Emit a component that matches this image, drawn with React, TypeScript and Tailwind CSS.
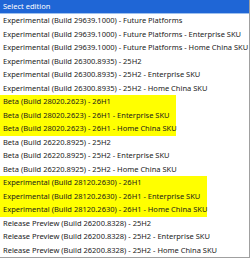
import React from "react";

type Row = { t: string; hl?: number };

const rows: Row[] = [
  { t: "Experimental (Build 29639.1000) - Future Platforms" },
  { t: "Experimental (Build 29639.1000) - Future Platforms - Enterprise SKU" },
  { t: "Experimental (Build 29639.1000) - Future Platforms - Home China SKU" },
  { t: "Experimental (Build 26300.8935) - 25H2" },
  { t: "Experimental (Build 26300.8935) - 25H2 - Enterprise SKU" },
  { t: "Experimental (Build 26300.8935) - 25H2 - Home China SKU" },
  { t: "Beta (Build 28020.2623) - 26H1", hl: 176 },
  { t: "Beta (Build 28020.2623) - 26H1 - Enterprise SKU", hl: 176 },
  { t: "Beta (Build 28020.2623) - 26H1 - Home China SKU", hl: 176 },
  { t: "Beta (Build 26220.8925) - 25H2" },
  { t: "Beta (Build 26220.8925) - 25H2 - Enterprise SKU" },
  { t: "Beta (Build 26220.8925) - 25H2 - Home China SKU" },
  { t: "Experimental (Build 28120.2630) - 26H1", hl: 207 },
  { t: "Experimental (Build 28120.2630) - 26H1 - Enterprise SKU", hl: 207 },
  { t: "Experimental (Build 28120.2630) - 26H1 - Home China SKU", hl: 207 },
  { t: "Release Preview (Build 26200.8328) - 25H2" },
  { t: "Release Preview (Build 26200.8328) - 25H2 - Enterprise SKU" },
  { t: "Release Preview (Build 26200.8328) - 25H2 - Home China SKU" },
];

export default function App() {
  return (
    <div
      className="w-[250px] h-[261px] bg-white overflow-hidden text-[7.5px] leading-none text-[#1a1a1a]"
      style={{ fontFamily: '"Noto Sans", "Open Sans", sans-serif' }}
    >
      <div className="w-[250px] h-[258px] border-r border-b border-[#a0a0a0] flex flex-col">
        <div className="h-[14px] shrink-0 bg-[#1f66d6] text-white flex items-center pl-[3px] border-b border-[#9dc0ee]">
          Select edition
        </div>
        {rows.map((r, i) => (
          <div key={i} className="h-[13.5px] shrink-0 flex items-center">
            <div
              className={
                "h-full flex items-center pl-[3px] whitespace-nowrap " +
                (r.hl ? "bg-[#ffff00]" : "")
              }
              style={r.hl ? { width: r.hl } : undefined}
            >
              {r.t}
            </div>
          </div>
        ))}
      </div>
    </div>
  );
}
